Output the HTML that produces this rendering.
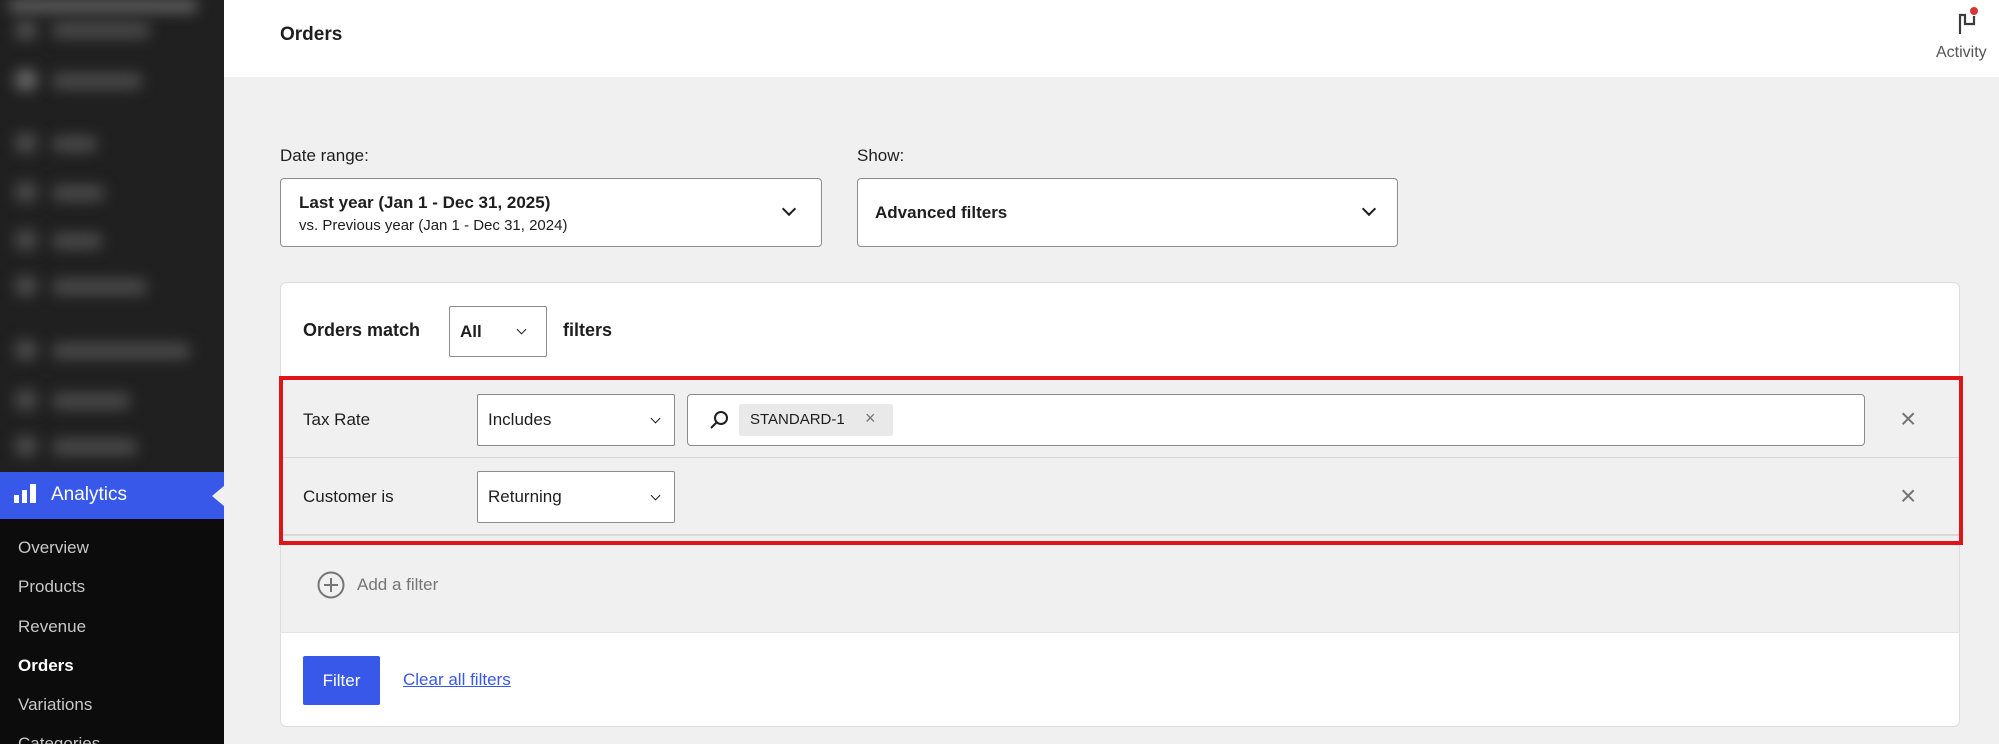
<!DOCTYPE html>
<html><head><meta charset="utf-8"><style>
*{box-sizing:border-box;margin:0;padding:0}
html{width:1999px;height:744px;overflow:hidden;background:#f0f0f0}
body{width:1999px;height:744px;overflow:hidden;background:#f0f0f0;font-family:"Liberation Sans",Arial,sans-serif;color:#1e1e1e;position:relative}
.abs{position:absolute}
#side{left:0;top:0;width:224px;height:744px;background:#0c0c0c}
#sidetop{left:0;top:0;width:224px;height:472px;background:#202020;overflow:hidden}
.blob{position:absolute;background:#4a4a4a;filter:blur(7px);border-radius:6px}
#ana{left:0;top:472px;width:224px;height:47px;background:#3858e9;color:#fff;font-size:19px}
.mi{position:absolute;left:18px;font-size:17px;color:#c8c8c8}
#header{left:224px;top:0;right:0;height:77px;background:#fff}
.sel{position:absolute;background:#fff;border:1px solid #8c8c8c;border-radius:2px}
.chev{position:absolute;width:10px;height:10px;border-right:2px solid #1e1e1e;border-bottom:2px solid #1e1e1e;transform:rotate(45deg)}
.chs{position:absolute;width:7px;height:7px;border-right:1.5px solid #1e1e1e;border-bottom:1.5px solid #1e1e1e;transform:rotate(45deg)}
.lbl{position:absolute;font-size:17px}
</style></head><body>
<div id="side" class="abs">
 <div id="sidetop" class="abs">
  <div class="blob" style="left:8px;top:0;width:190px;height:12px;background:#666"></div>
  <div class="blob" style="left:15px;top:20px;width:22px;height:20px"></div><div class="blob" style="left:52px;top:22px;width:98px;height:16px"></div>
  <div class="blob" style="left:15px;top:70px;width:22px;height:20px;background:#666"></div><div class="blob" style="left:52px;top:73px;width:90px;height:16px"></div>
  <div class="blob" style="left:15px;top:133px;width:22px;height:20px"></div><div class="blob" style="left:52px;top:136px;width:45px;height:16px"></div>
  <div class="blob" style="left:15px;top:182px;width:22px;height:20px"></div><div class="blob" style="left:52px;top:185px;width:52px;height:16px"></div>
  <div class="blob" style="left:15px;top:230px;width:22px;height:20px"></div><div class="blob" style="left:52px;top:233px;width:50px;height:16px"></div>
  <div class="blob" style="left:15px;top:276px;width:22px;height:20px"></div><div class="blob" style="left:52px;top:279px;width:95px;height:16px"></div>
  <div class="blob" style="left:15px;top:340px;width:22px;height:20px"></div><div class="blob" style="left:52px;top:343px;width:138px;height:16px"></div>
  <div class="blob" style="left:15px;top:390px;width:22px;height:20px"></div><div class="blob" style="left:52px;top:393px;width:78px;height:16px"></div>
  <div class="blob" style="left:15px;top:436px;width:22px;height:20px"></div><div class="blob" style="left:52px;top:439px;width:85px;height:16px"></div>
 </div>
 <div id="ana" class="abs">
  <div class="abs" style="left:14px;top:23px;width:5px;height:8px;background:#fff"></div>
  <div class="abs" style="left:22px;top:18px;width:5px;height:13px;background:#fff"></div>
  <div class="abs" style="left:30px;top:12px;width:6px;height:19px;background:#fff"></div>
  <div class="abs" style="left:51px;top:12px">Analytics</div>
  <div class="abs" style="left:212px;top:14px;width:0;height:0;border-top:10px solid transparent;border-bottom:10px solid transparent;border-right:12px solid #f0f0f0"></div>
 </div>
 <div class="mi" style="top:538px">Overview</div>
 <div class="mi" style="top:577px">Products</div>
 <div class="mi" style="top:617px">Revenue</div>
 <div class="mi" style="top:656px;color:#fff;font-weight:bold">Orders</div>
 <div class="mi" style="top:695px">Variations</div>
 <div class="mi" style="top:734px">Categories</div>
</div>
<div id="header" class="abs">
 <div class="abs" style="left:56px;top:24px;font-size:19px;font-weight:600">Orders</div>
 <svg class="abs" style="left:1728px;top:4px" width="30" height="32" viewBox="0 0 30 32"><path d="M8 30V11h5v9h9v-8" fill="none" stroke="#3c3c3c" stroke-width="2.2"/><circle cx="22" cy="7" r="4" fill="#d63638"/></svg>
 <div class="abs" style="left:1712px;top:44px;font-size:16px;color:#555">Activity</div>
</div>
<div class="lbl" style="left:280px;top:146px">Date range:</div>
<div class="lbl" style="left:857px;top:146px">Show:</div>
<div class="sel" style="left:280px;top:178px;width:542px;height:69px;border-radius:4px">
 <div class="abs" style="left:18px;top:14px;font-size:17px;font-weight:600">Last year (Jan 1 - Dec 31, 2025)</div>
 <div class="abs" style="left:18px;top:38px;font-size:15px">vs. Previous year (Jan 1 - Dec 31, 2024)</div>
 <div class="chev" style="left:503px;top:25px"></div>
</div>
<div class="sel" style="left:857px;top:178px;width:541px;height:69px;border-radius:4px">
 <div class="abs" style="left:17px;top:24px;font-size:17px;font-weight:600">Advanced filters</div>
 <div class="chev" style="left:506px;top:25px"></div>
</div>
<div class="abs" style="left:280px;top:282px;width:1680px;height:445px;background:#fff;border:1px solid #ddd;border-radius:6px;overflow:hidden">
 <div class="abs" style="left:22px;top:37px;font-size:18px;font-weight:600">Orders match</div>
 <div class="sel" style="left:168px;top:23px;width:98px;height:51px">
  <div class="abs" style="left:10px;top:15px;font-size:17px;font-weight:600">All</div>
  <div class="chs" style="left:68px;top:19px"></div>
 </div>
 <div class="abs" style="left:282px;top:37px;font-size:18px;font-weight:600">filters</div>
 <div class="abs" style="left:0;top:97px;width:1680px;height:252px;background:#f0f0f0"></div>
 <div class="abs" style="left:0;top:174px;width:1680px;height:1px;background:#d8d8d8"></div>
 <div class="abs" style="left:0;top:251px;width:1680px;height:2px;background:#d8d8d8"></div>
 <div class="abs" style="left:22px;top:127px;font-size:17px">Tax Rate</div>
 <div class="sel" style="left:196px;top:111px;width:198px;height:52px">
  <div class="abs" style="left:10px;top:15px;font-size:17px">Includes</div>
  <div class="chs" style="left:174px;top:20px"></div>
 </div>
 <div class="sel" style="left:406px;top:111px;width:1178px;height:52px;border-radius:4px">
  <svg class="abs" style="left:20px;top:14px" width="22" height="22" viewBox="0 0 22 22"><circle cx="13" cy="9" r="6" fill="none" stroke="#1e1e1e" stroke-width="2"/><path d="M9 13L3 19" stroke="#1e1e1e" stroke-width="2"/></svg>
  <div class="abs" style="left:51px;top:9px;width:154px;height:32px;background:#e9e9e9;border-radius:2px">
   <div class="abs" style="left:11px;top:7px;font-size:15px">STANDARD-1</div>
   <div class="abs" style="left:126px;top:4px;font-size:18px;color:#757575">×</div>
  </div>
 </div>
 <div class="abs" style="left:1619px;top:120px;font-size:28px;color:#757575;font-weight:300">×</div>
 <div class="abs" style="left:22px;top:204px;font-size:17px">Customer is</div>
 <div class="sel" style="left:196px;top:188px;width:198px;height:52px">
  <div class="abs" style="left:10px;top:15px;font-size:17px">Returning</div>
  <div class="chs" style="left:174px;top:20px"></div>
 </div>
 <div class="abs" style="left:1619px;top:197px;font-size:28px;color:#757575;font-weight:300">×</div>
 <svg class="abs" style="left:35px;top:287px" width="30" height="30" viewBox="0 0 30 30"><circle cx="15" cy="15" r="12.5" fill="none" stroke="#757575" stroke-width="2"/><path d="M15 8v14M8 15h14" stroke="#757575" stroke-width="2"/></svg>
 <div class="abs" style="left:76px;top:292px;font-size:17px;color:#757575">Add a filter</div>
 <div class="abs" style="left:0;top:349px;width:1680px;height:1px;background:#e4e4e4"></div>
 <div class="abs" style="left:22px;top:373px;width:77px;height:49px;background:#3858e9;border-radius:2px;color:#fff;font-size:17px;text-align:center;line-height:49px">Filter</div>
 <div class="abs" style="left:122px;top:387px;font-size:17px;color:#3858e9;text-decoration:underline">Clear all filters</div>
</div>
<div class="abs" style="left:279px;top:376px;width:1684px;height:169px;border:4px solid #e0151b"></div>
</body></html>
